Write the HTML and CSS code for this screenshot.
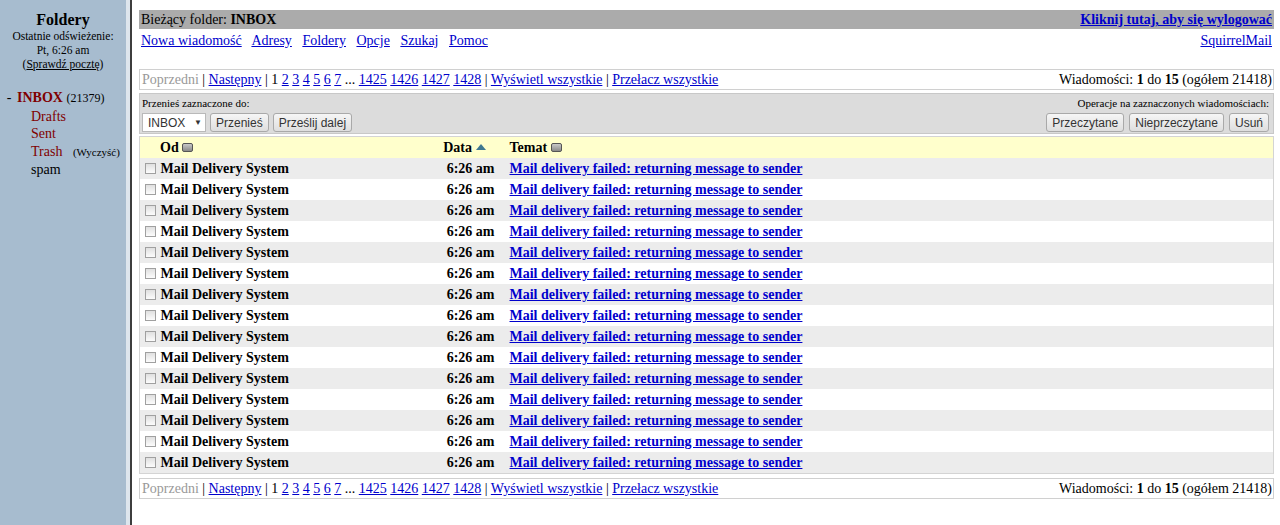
FILE: index.html
```html
<!DOCTYPE html>
<html lang="pl">

<head>
    <meta charset="UTF-8">
    <title>SquirrelMail - INBOX</title>
    <link rel="stylesheet" href="styles.css">
</head>

<body>
    <div class="sidebar">
        <div class="sb-title">Foldery</div>
        <div class="sb-small">Ostatnie odświeżenie:<br>Pt, 6:26 am<br>(<a href="#" class="plain">Sprawdź pocztę</a>)</div>

        <table class="folders">
            <tr>
                <td class="dash">-</td>
                <td><a href="#" class="inbox">INBOX</a> <span class="count">(21379)</span></td>
            </tr>
            <tr><td></td><td class="sub"><a href="#" class="fold">Drafts</a></td></tr>
            <tr><td></td><td class="sub"><a href="#" class="fold">Sent</a></td></tr>
            <tr><td></td><td class="sub"><a href="#" class="fold">Trash</a>&nbsp;&nbsp; <span class="purge">(Wyczyść)</span></td></tr>
            <tr><td></td><td class="sub"><span class="spam">spam</span></td></tr>
        </table>
    </div>

    <div class="main">
        <div class="topbar">
            <span>Bieżący folder: <b>INBOX</b></span>
            <a href="#" class="logout">Kliknij tutaj, aby się wylogować</a>
        </div>
        <div class="navrow">
            <div class="navlinks">
                <a href="#">Nowa wiadomość</a>
                <a href="#">Adresy</a>
                <a href="#">Foldery</a>
                <a href="#">Opcje</a>
                <a href="#">Szukaj</a>
                <a href="#">Pomoc</a>
            </div>
            <a href="#">SquirrelMail</a>
        </div>

        <div class="pager">
            <span><span class="muted">Poprzedni</span> | <a href="#">Następny</a> | 1 <a href="#">2</a> <a href="#">3</a> <a href="#">4</a> <a href="#">5</a> <a href="#">6</a> <a href="#">7</a> ... <a href="#">1425</a> <a href="#">1426</a> <a href="#">1427</a> <a href="#">1428</a> | <a href="#">Wyświetl wszystkie</a> | <a href="#">Przełacz wszystkie</a></span>
            <span>Wiadomości: <b>1</b> do <b>15</b> (ogółem 21418)</span>
        </div>

        <div class="movebar">
            <div class="move-left">
                <div class="label">Przenieś zaznaczone do:</div>
                <div class="controls">
                    <span class="select">INBOX <span class="arrow">▼</span></span>
                    <button>Przenieś</button>
                    <button>Prześlij dalej</button>
                </div>
            </div>
            <div class="move-right">
                <div class="label">Operacje na zaznaczonych wiadomościach:</div>
                <div class="controls">
                    <button>Przeczytane</button>
                    <button>Nieprzeczytane</button>
                    <button>Usuń</button>
                </div>
            </div>
        </div>

        <table class="messages">
            <colgroup>
                <col class="c-from">
                <col class="c-date">
                <col>
            </colgroup>
            <thead>
                <tr>
                    <th class="from-h">Od <span class="sorticon"></span></th>
                    <th class="date-h">Data <span class="sortup"></span></th>
                    <th>Temat <span class="sorticon"></span></th>
                </tr>
            </thead>
            <tbody id="rows"></tbody>
        </table>

        <div class="pager">
            <span><span class="muted">Poprzedni</span> | <a href="#">Następny</a> | 1 <a href="#">2</a> <a href="#">3</a> <a href="#">4</a> <a href="#">5</a> <a href="#">6</a> <a href="#">7</a> ... <a href="#">1425</a> <a href="#">1426</a> <a href="#">1427</a> <a href="#">1428</a> | <a href="#">Wyświetl wszystkie</a> | <a href="#">Przełacz wszystkie</a></span>
            <span>Wiadomości: <b>1</b> do <b>15</b> (ogółem 21418)</span>
        </div>
    </div>

    <script>
        // 15 wiadomości na stronie
        var tbody = document.getElementById('rows');
        for (var i = 0; i < 15; i++) {
            var tr = document.createElement('tr');
            tr.className = i % 2 === 0 ? 'odd' : 'even';
            tr.innerHTML = '<td><span class="check"></span> Mail Delivery System</td>' +
                '<td class="date">6:26 am</td>' +
                '<td><a href="#">Mail delivery failed: returning message to sender</a></td>';
            tbody.appendChild(tr);
        }
    </script>
</body>

</html>
```

FILE: styles.css
```css
html, body {
    margin: 0;
    height: 100%;
}

body {
    display: flex;
    font-family: "Liberation Serif", "Times New Roman", serif;
    font-size: 14px;
    color: #000;
    background: #fff;
}

a {
    color: #0000cc;
}

/* lewa ramka */
.sidebar {
    width: 126px;
    flex: none;
    background: #a7bccf;
    border-right: 4px solid #dde5ed;
    text-align: center;
}

.sb-title {
    font-weight: bold;
    font-size: 16px;
    margin-top: 11px;
    line-height: 18px;
}

.sb-small {
    font-size: 11.5px;
    line-height: 14px;
}

.sb-small a.plain {
    color: #000;
}

.folders {
    margin: 18px 0 0 1px;
    border-collapse: collapse;
    text-align: left;
}

.folders td {
    padding: 0;
    line-height: 17.5px;
    vertical-align: top;
}

.folders .dash {
    width: 16px;
    text-align: center;
}

.folders .sub {
    padding-left: 14px;
}

.inbox {
    color: #800000;
    font-weight: bold;
    text-decoration: none;
}

.count {
    font-size: 12px;
}

.fold {
    color: #800000;
    text-decoration: none;
}

.purge {
    font-size: 11px;
}

/* główna ramka */
.main {
    flex: 1;
    border-left: 2px solid #3d3d3d;
    padding: 10px 6px 0 7px;
}

.topbar {
    display: flex;
    justify-content: space-between;
    background: #ababab;
    height: 19px;
    line-height: 19px;
    padding: 0 2px;
}

.logout {
    font-weight: bold;
}

.navrow {
    display: flex;
    justify-content: space-between;
    padding: 3px 2px 0;
    line-height: 18px;
}

.navlinks a {
    margin-right: 7px;
}

.pager {
    display: flex;
    justify-content: space-between;
    border: 1px solid #d0d0d0;
    margin-top: 19px;
    padding: 0 1px 0 2px;
    line-height: 19px;
}

.muted {
    color: #999;
}

.movebar {
    display: flex;
    justify-content: space-between;
    background: #dcdcdc;
    border: 1px solid #c8c8c8;
    margin-top: 3px;
    padding: 2px 4px 1px 2px;
}

.movebar .label {
    font-size: 11px;
    line-height: 14px;
}

.move-right {
    text-align: right;
}

.controls {
    display: flex;
    gap: 5px;
    margin-top: 3px;
}

.move-left .controls {
    gap: 4px;
}

.move-right .controls {
    justify-content: flex-end;
}

button {
    font-family: "Liberation Sans", Arial, sans-serif;
    font-size: 12px;
    height: 19px;
    padding: 0 5px;
    border: 1px solid #a9a9a9;
    border-radius: 3px;
    background: linear-gradient(#f6f6f6, #dedede);
    color: #333;
}

.select {
    display: inline-flex;
    justify-content: space-between;
    align-items: center;
    width: 54px;
    height: 17px;
    padding: 0 3px 0 5px;
    background: #fff;
    border: 1px solid #b9b9b9;
    font-family: "Liberation Sans", Arial, sans-serif;
    font-size: 12px;
    color: #333;
}

.select .arrow {
    font-size: 8px;
}

.messages {
    width: 100%;
    border-collapse: collapse;
    table-layout: fixed;
    margin-top: 2px;
    border: 1px solid #d4d4d4;
}

.c-from {
    width: 296px;
}

.c-date {
    width: 74px;
}

.messages th,
.messages td {
    height: 21px;
    padding: 0;
    text-align: left;
    font-weight: bold;
    white-space: nowrap;
}

.messages thead tr {
    background: #ffffcc;
}

.messages th.from-h {
    padding-left: 20px;
}

.messages td:first-child {
    padding-left: 5px;
}

.messages .date {
    text-align: right;
    padding-right: 15px;
}

.messages .date-h {
    text-align: right;
    padding-right: 24px;
}

.messages tr.odd {
    background: #ececec;
}

.messages tr.even {
    background: #fff;
}

.check {
    display: inline-block;
    width: 9px;
    height: 9px;
    border: 1px solid #a0a0a0;
    background: linear-gradient(#e0e0e0, #fcfcfc);
    vertical-align: -1px;
    margin-right: 1px;
}

.sorticon {
    display: inline-block;
    width: 9px;
    height: 7px;
    border: 1px solid #555;
    border-radius: 2px;
    background: linear-gradient(#c8c8c8, #8a8a8a);
    vertical-align: 0;
}

.sortup {
    display: inline-block;
    width: 0;
    height: 0;
    border-left: 5px solid transparent;
    border-right: 5px solid transparent;
    border-bottom: 6px solid #3f7890;
    vertical-align: 2px;
}

.main > .pager:last-child {
    margin-top: 4px;
}
```
